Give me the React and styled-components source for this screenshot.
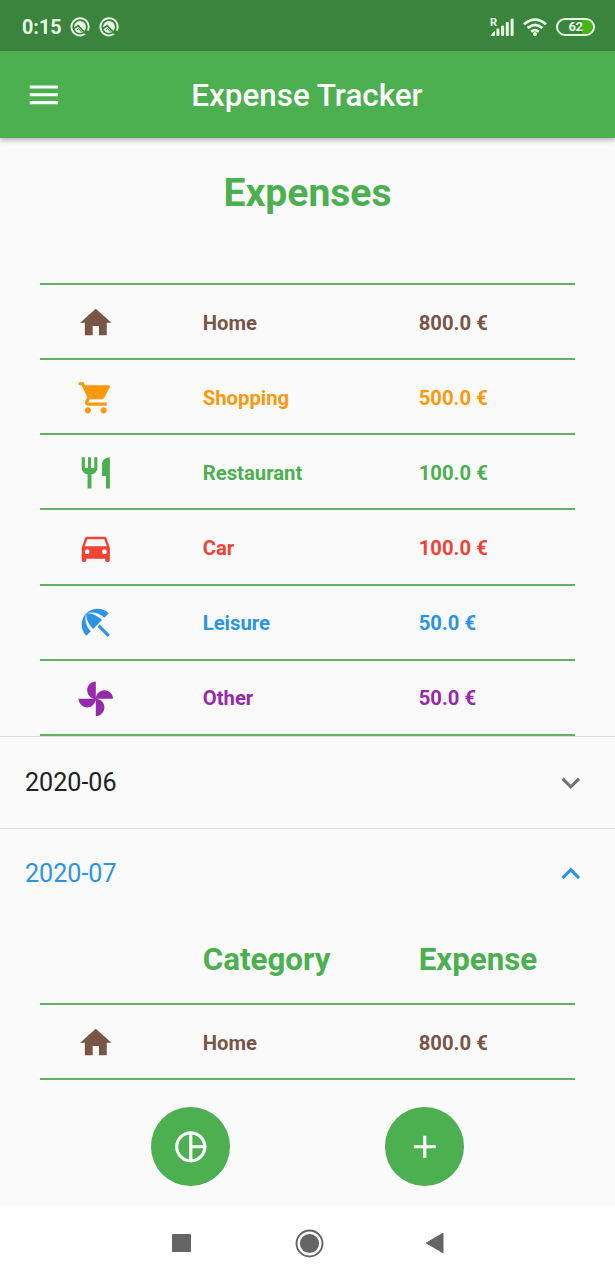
import React from 'react';
import styled, { createGlobalStyle } from 'styled-components';

const GREEN = '#4caf50';
const BLUE = '#2b94e4';

const GlobalStyle = createGlobalStyle`
  * { box-sizing: border-box; }
  body { margin: 0; background: #fafafa; font-family: Roboto, "Liberation Sans", sans-serif; }
`;

const Screen = styled.div`
  width: 615px;
  height: 1280px;
  display: flex;
  flex-direction: column;
  overflow: hidden;
  background: #fafafa;
`;

const StatusBar = styled.header`
  height: 51px;
  flex: none;
  display: flex;
  align-items: center;
  padding: 3px 20px 0 22px;
  background: #3b843e;
  color: #e6fbe2;
`;

const Clock = styled.span`
  width: 48px;
  padding-top: 1px;
  font-size: 19.8px;
  font-weight: 700;
  line-height: 24px;
`;

const Notifications = styled.div`
  display: flex;
  gap: 8.5px;
  flex: 1;
`;

const SystemIcons = styled.div`
  display: flex;
  align-items: center;
  gap: 9px;
`;

const Graphic = styled.svg`
  display: block;
  flex: none;
`;

const Signal = styled.div`
  position: relative;
`;

const Roaming = styled.span`
  position: absolute;
  left: 0;
  top: -1.5px;
  font-size: 11px;
  font-weight: 700;
  line-height: 12px;
`;

const Battery = styled.div`
  width: 39px;
  height: 18px;
  border: 2px solid #e6fbe2;
  border-radius: 9px;
  display: flex;
  align-items: center;
  justify-content: center;
  font-size: 13px;
  font-weight: 700;
  line-height: 14px;
  letter-spacing: -0.5px;
  background: linear-gradient(90deg, #3b843e 0 24px, #46b614 24px) 0 0 / 34px 100% no-repeat content-box;
`;

const AppBar = styled.div`
  height: 87px;
  flex: none;
  display: grid;
  grid-template-columns: 87px 1fr 88px;
  align-items: center;
  justify-items: center;
  background: ${GREEN};
  color: #fff;
  box-shadow: 0 2px 5px rgba(0, 0, 0, 0.3);
  z-index: 1;
`;

const AppTitle = styled.h1`
  margin: 3px 0 0;
  font-size: 31.4px;
  font-weight: 500;
  line-height: 38px;
  white-space: nowrap;
`;

const Content = styled.main`
  flex: 1;
  min-height: 0;
  display: flex;
  flex-direction: column;
`;

const Heading = styled.h2`
  margin: 0;
  height: 145px;
  padding-top: 32px;
  text-align: center;
  font-size: 39.1px;
  font-weight: 700;
  line-height: 46px;
  color: ${GREEN};
`;

const Table = styled.div`
  margin: 0 40px;
`;

const Row = styled.div`
  height: 75.2px;
  display: grid;
  grid-template-columns: 162.7px 216px 1fr;
  align-items: center;
  padding-top: 2px;
  border-bottom: 2px solid #65b068;
  font-weight: 700;
  font-size: 20.3px;
  line-height: 24px;
  color: ${(p) => p.$color};
  ${(p) => p.$first && 'border-top: 2px solid #65b068; height: 77px;'}
`;

const HeaderRow = styled(Row)`
  height: 86px;
  padding: 0 0 2px;
  font-size: 31.3px;
  line-height: 38px;
`;

const IconCell = styled.div`
  padding-left: 37.3px;
`;

const Panel = styled.button`
  height: ${(p) => p.$height}px;
  flex: none;
  width: 100%;
  border: 0;
  border-top: 1.5px solid #d9d9d9;
  background: transparent;
  display: flex;
  align-items: center;
  justify-content: space-between;
  padding: 0 25px;
  font: 400 25.1px/30px Roboto, "Liberation Sans", sans-serif;
  color: ${(p) => p.$color};
`;

const PanelTitle = styled.span`
  padding-top: ${(p) => (p.$open ? 0 : 2)}px;
`;

const Chevron = styled.span`
  display: flex;
  color: ${(p) => (p.$open ? BLUE : '#737373')};
`;

const Actions = styled.div`
  display: flex;
  justify-content: center;
  gap: 155.5px;
  padding-top: 27px;
`;

const RoundButton = styled.button`
  width: 78.6px;
  height: 78.6px;
  border: 0;
  padding: 0;
  border-radius: 50%;
  background: ${GREEN};
  color: #fff;
  display: flex;
  align-items: center;
  justify-content: center;
`;

const NavBar = styled.nav`
  height: 74px;
  flex: none;
  display: flex;
  align-items: center;
  padding-left: 172px;
  background: #fff;
  color: #656565;
`;

const RecentsGlyph = styled.div`
  width: 19px;
  height: 18px;
  border-radius: 1px;
  background: currentColor;
  margin-right: 104px;
`;

const HomeGlyph = styled(Graphic)`
  margin-right: 101px;
`;

const PATHS = {
  menu: 'M3 18h18v-2H3v2zm0-5h18v-2H3v2zm0-7v2h18V6H3z',
  home: 'M10 20v-6h4v6h5v-8h3L12 3 2 12h3v8z',
  cart: 'M7 18c-1.1 0-1.99.9-1.99 2S5.9 22 7 22s2-.9 2-2-.9-2-2-2zM1 2v2h2l3.6 7.59-1.35 2.45c-.16.28-.25.61-.25.96 0 1.1.9 2 2 2h12v-2H7.42c-.14 0-.25-.11-.25-.25l.03-.12.9-1.63h7.45c.75 0 1.41-.41 1.75-1.03l3.58-6.49c.08-.14.12-.31.12-.48 0-.55-.45-1-1-1H5.21l-.94-2H1zm16 16c-1.1 0-1.99.9-1.99 2s.89 2 1.99 2 2-.9 2-2-.9-2-2-2z',
  restaurant: 'M11 9H9V2H7v7H5V2H3v7c0 2.12 1.66 3.84 3.75 3.97V22h2.5v-9.03C11.34 12.84 13 11.12 13 9V2h-2v7zm5-3v8h2.5v8H21V2c-2.76 0-5 2.24-5 4z',
  car: 'M18.92 6.01C18.72 5.42 18.16 5 17.5 5h-11c-.66 0-1.21.42-1.42 1.01L3 12v8c0 .55.45 1 1 1h1c.55 0 1-.45 1-1v-1h12v1c0 .55.45 1 1 1h1c.55 0 1-.45 1-1v-8l-2.08-5.99zM6.5 16c-.83 0-1.5-.67-1.5-1.5S5.67 13 6.5 13s1.5.67 1.5 1.5S7.33 16 6.5 16zm11 0c-.83 0-1.5-.67-1.5-1.5s.67-1.5 1.5-1.5 1.5.67 1.5 1.5-.67 1.5-1.5 1.5zM5 11l1.5-4.5h11L19 11H5z',
  beach: 'M13.127 14.56l1.43-1.43 6.44 6.443L19.57 21zm4.293-5.73l2.86-2.86c-3.95-3.95-10.35-3.96-14.3-.02 3.93-1.3 8.31-.25 11.44 2.88zM5.95 5.98c-3.94 3.95-3.93 10.35.02 14.3l2.86-2.86C5.7 14.29 4.65 9.91 5.95 5.98zm.02-.02l-.01.01c-.38 3.01 1.17 6.88 4.3 10.02l5.73-5.73c-3.13-3.13-7.01-4.68-10.02-4.3z',
  toys: 'M12 12c0-3 2.5-5.5 5.5-5.5S23 9 23 12H12zm0 0c0 3-2.5 5.5-5.5 5.5S1 15 1 12h11zm0 0c-3 0-5.5-2.5-5.5-5.5S9 1 12 1v11zm0 0c3 0 5.5 2.5 5.5 5.5S15 23 12 23V12z',
  down: 'M16.59 8.59L12 13.17 7.41 8.59 6 10l6 6 6-6z',
  up: 'M12 8l-6 6 1.41 1.41L12 10.83l4.59 4.58L18 14z',
  pie: 'M12 2C6.48 2 2 6.48 2 12s4.48 10 10 10 10-4.48 10-10S17.52 2 12 2zm1 2.07c3.61.45 6.48 3.33 6.93 6.93H13V4.07zM4 12c0-4.06 3.07-7.44 7-7.93v15.87c-3.93-.5-7-3.88-7-7.94zm9 7.93V13h6.93c-.45 3.61-3.32 6.48-6.93 6.93z',
  add: 'M19 13h-6v6h-2v-6H5v-2h6V5h2v6h6v2z',
};

function Icon({ name }) {
  return (
    <Graphic width="37.6" height="37.6" viewBox="0 0 24 24" fill="currentColor">
      <path d={PATHS[name]} />
    </Graphic>
  );
}

function NotificationIcon() {
  return (
    <Graphic width="20" height="20" viewBox="0 0 20 20" fill="none">
      <path d="M15.4 16.6A8.6 8.6 0 1 1 17.8 13.6" stroke="currentColor" strokeWidth="1.9" />
      <circle cx="10" cy="10" r="5.9" fill="currentColor" />
      <path d="M3.8 11.6L8.2 8.7L16 17" stroke="#3b843e" strokeWidth="1.7" />
      <path d="M7 12.8L8.6 11.6L11.8 15.2" stroke="#3b843e" strokeWidth="1" />
    </Graphic>
  );
}

const EXPENSES = [
  { icon: 'home', name: 'Home', value: '800.0 €', color: '#795548' },
  { icon: 'cart', name: 'Shopping', value: '500.0 €', color: '#fb990c' },
  { icon: 'restaurant', name: 'Restaurant', value: '100.0 €', color: GREEN },
  { icon: 'car', name: 'Car', value: '100.0 €', color: '#ee4438' },
  { icon: 'beach', name: 'Leisure', value: '50.0 €', color: BLUE },
  { icon: 'toys', name: 'Other', value: '50.0 €', color: '#9729ab' },
];

function ExpenseRow({ item, first }) {
  return (
    <Row $color={item.color} $first={first}>
      <IconCell><Icon name={item.icon} /></IconCell>
      <span>{item.name}</span>
      <span>{item.value}</span>
    </Row>
  );
}

function MonthPanel({ label, open, height }) {
  return (
    <Panel $height={height} $color={open ? BLUE : '#212121'}>
      <PanelTitle $open={open}>{label}</PanelTitle>
      <Chevron $open={open}>
        <Icon name={open ? 'up' : 'down'} />
      </Chevron>
    </Panel>
  );
}

export default function App() {
  return (
    <Screen>
      <GlobalStyle />
      <StatusBar>
        <Clock>0:15</Clock>
        <Notifications>
          <NotificationIcon />
          <NotificationIcon />
        </Notifications>
        <SystemIcons>
          <Signal>
            <Roaming>R</Roaming>
            <Graphic width="24" height="18" viewBox="0 0 24 18" fill="currentColor">
              <path d="M1 17.5L4.5 13.5V17.5Z" stroke="currentColor" strokeLinejoin="round" />
              <rect x="6.4" y="10.5" width="3" height="7.5" rx="1" />
              <rect x="11.1" y="7.5" width="3" height="10.5" rx="1" />
              <rect x="15.8" y="4" width="3" height="14" rx="1" />
              <rect x="20.6" y="0.5" width="3" height="17.5" rx="1" />
            </Graphic>
          </Signal>
          <Graphic width="24" height="18" viewBox="0 0 24 18" fill="none" stroke="currentColor" strokeWidth="2.7">
            <path d="M1 6.2Q12-3 23 6.2M4.6 10.1Q12 3.8 19.4 10.1M8.2 13.7Q12 10.7 15.8 13.7" />
            <circle cx="12" cy="16" r="2" fill="currentColor" stroke="none" />
          </Graphic>
          <Battery>62</Battery>
        </SystemIcons>
      </StatusBar>
      <AppBar>
        <Icon name="menu" />
        <AppTitle>Expense Tracker</AppTitle>
      </AppBar>
      <Content>
        <Heading>Expenses</Heading>
        <Table>
          {EXPENSES.map((item, i) => (
            <ExpenseRow key={item.name} item={item} first={i === 0} />
          ))}
        </Table>
        <MonthPanel label="2020-06" height={92} />
        <MonthPanel label="2020-07" height={91} open />
        <Table>
          <HeaderRow $color={GREEN}>
            <span />
            <span>Category</span>
            <span>Expense</span>
          </HeaderRow>
          <ExpenseRow item={EXPENSES[0]} />
        </Table>
        <Actions>
          <RoundButton aria-label="Chart"><Icon name="pie" /></RoundButton>
          <RoundButton aria-label="Add"><Icon name="add" /></RoundButton>
        </Actions>
      </Content>
      <NavBar>
        <RecentsGlyph />
        <HomeGlyph width="29" height="29" viewBox="0 0 29 29">
          <circle cx="14.5" cy="14.5" r="13" fill="none" stroke="currentColor" strokeWidth="1.9" />
          <circle cx="14.5" cy="14.5" r="9.6" fill="currentColor" />
        </HomeGlyph>
        <Graphic width="20" height="22" viewBox="0 0 20 22" fill="currentColor">
          <path d="M1.3 11L18 1.2V20.8Z" stroke="currentColor" strokeLinejoin="round" />
        </Graphic>
      </NavBar>
    </Screen>
  );
}
